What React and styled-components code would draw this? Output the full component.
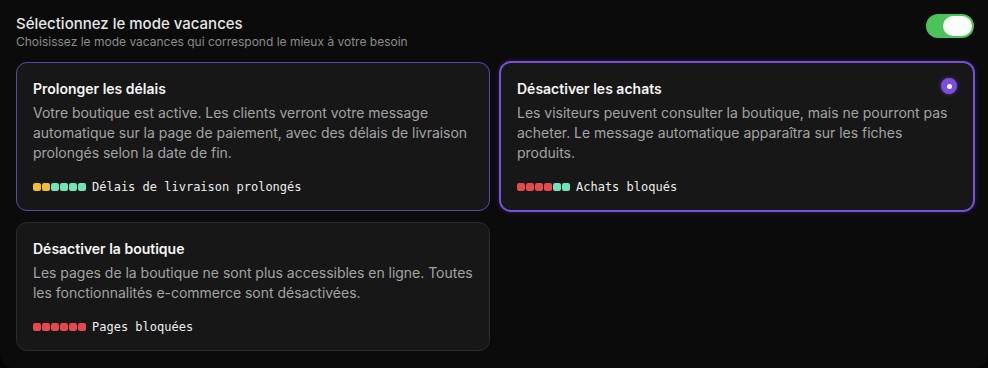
import React from "react";
import styled, { createGlobalStyle } from "styled-components";

const Global = createGlobalStyle`
  html, body { margin: 0; padding: 0; background: #050505; }
  body { font-family: Inter, "Noto Sans", sans-serif; -webkit-font-smoothing: antialiased; }
  * { box-sizing: border-box; }
`;

const Panel = styled.section`
  width: 988px;
  height: 368px;
  background: #0b0b0b;
  border-radius: 0 0 14px 14px;
  padding: 14px 14px 0 16px;
`;

const Header = styled.header`
  display: flex;
  justify-content: space-between;
  align-items: flex-start;
  height: 48px;
`;

const HeadText = styled.div`
  display: flex;
  flex-direction: column;
  gap: 1px;
`;

const Title = styled.h1`
  margin: 0;
  font-size: 15px;
  line-height: 19px;
  font-weight: 500;
  color: #e6e6e6;
`;

const Subtitle = styled.p`
  margin: 0;
  font-size: 12px;
  line-height: 16px;
  color: #8c8c8c;
`;

const Toggle = styled.button`
  width: 48px;
  height: 24px;
  border: none;
  border-radius: 12px;
  background: #4cc35a;
  padding: 2px;
  display: flex;
  justify-content: flex-end;
  align-items: center;
  cursor: pointer;
`;

const Knob = styled.span`
  width: 29px;
  height: 20px;
  border-radius: 10px;
  background: #fbfdf8;
`;

const Grid = styled.div`
  display: grid;
  grid-template-columns: 474px 474px;
  column-gap: 10px;
  row-gap: 11px;
  align-items: start;
`;

const Card = styled.div`
  position: relative;
  background: #171717;
  border-radius: 11px;
  border: 1px solid ${(p) => (p.$variant === "selected" ? "#7a4fdc" : p.$variant === "hover" ? "#5c47b0" : "#2c2c2c")};
  box-shadow: ${(p) =>
    p.$variant === "selected"
      ? "0 0 0 1px #7a4fdc, 0 0 6px rgba(122,79,220,0.35)"
      : "none"};
  padding: 16px 14px 15px 16px;
  display: flex;
  flex-direction: column;
`;

const CardTitle = styled.h2`
  margin: 0;
  font-size: 14px;
  line-height: 20px;
  font-weight: 600;
  color: #f5f5f5;
`;

const Desc = styled.p`
  margin: 4px 0 0;
  font-size: 14px;
  line-height: 20px;
  color: #a3a3a3;
  letter-spacing: -0.02px;
`;

const Indicator = styled.div`
  margin-top: 16px;
  display: flex;
  align-items: center;
  gap: 6px;
  height: 16px;
`;

const Dots = styled.div`
  display: flex;
  gap: 1px;
`;

const Dot = styled.span`
  width: 8px;
  height: 8px;
  border-radius: 2px;
  background: ${(p) => (p.$c === "y" ? "#f4bd2f" : p.$c === "g" ? "#72e3b5" : "#e5484d")};
`;

const Mono = styled.span`
  font-family: "DejaVu Sans Mono", "Liberation Mono", monospace;
  font-size: 12px;
  color: #ededed;
`;

const Radio = styled.span`
  position: absolute;
  top: 15px;
  right: 16px;
  width: 16px;
  height: 16px;
  border-radius: 50%;
  background: #7c4ddf;
  box-shadow: 0 0 4px rgba(124, 77, 223, 0.6);
  display: flex;
  align-items: center;
  justify-content: center;
  &::after {
    content: "";
    width: 5px;
    height: 5px;
    border-radius: 50%;
    background: #fff;
  }
`;

const cards = [
  {
    title: "Prolonger les délais",
    desc: "Votre boutique est active. Les clients verront votre message automatique sur la page de paiement, avec des délais de livraison prolongés selon la date de fin.",
    dots: "yygggg",
    label: "Délais de livraison prolongés",
    variant: "hover",
  },
  {
    title: "Désactiver les achats",
    desc: "Les visiteurs peuvent consulter la boutique, mais ne pourront pas acheter. Le message automatique apparaîtra sur les fiches produits.",
    dots: "rrrrgg",
    label: "Achats bloqués",
    variant: "selected",
  },
  {
    title: "Désactiver la boutique",
    desc: "Les pages de la boutique ne sont plus accessibles en ligne. Toutes les fonctionnalités e-commerce sont désactivées.",
    dots: "rrrrrr",
    label: "Pages bloquées",
    variant: "default",
  },
];

export default function App() {
  return (
    <>
      <Global />
      <Panel>
        <Header>
          <HeadText>
            <Title>Sélectionnez le mode vacances</Title>
            <Subtitle>Choisissez le mode vacances qui correspond le mieux à votre besoin</Subtitle>
          </HeadText>
          <Toggle aria-label="Mode vacances">
            <Knob />
          </Toggle>
        </Header>
        <Grid>
          {cards.map((c) => (
            <Card key={c.title} $variant={c.variant}>
              {c.variant === "selected" && <Radio />}
              <CardTitle>{c.title}</CardTitle>
              <Desc>{c.desc}</Desc>
              <Indicator>
                <Dots>
                  {c.dots.split("").map((d, i) => (
                    <Dot key={i} $c={d} />
                  ))}
                </Dots>
                <Mono>{c.label}</Mono>
              </Indicator>
            </Card>
          ))}
        </Grid>
      </Panel>
    </>
  );
}
